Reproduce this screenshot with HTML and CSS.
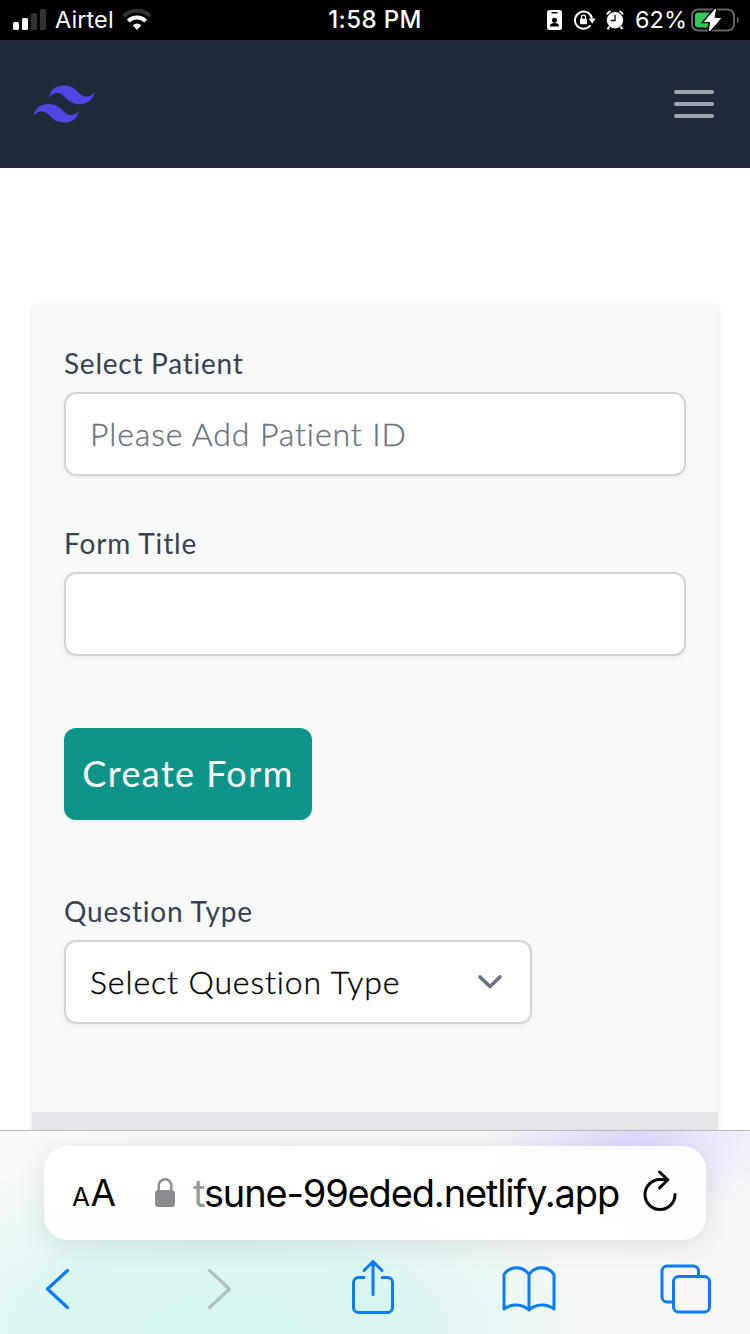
FILE: index.html
```html
<!DOCTYPE html>
<html lang="en">
<head>
<meta charset="utf-8">
<title>Create Form</title>
<link rel="stylesheet" href="styles.css">
</head>
<body>
<div class="screen">
  <header class="status">
    <div class="status-left">
      <svg class="signal" width="34" height="22" viewBox="0 0 34 22"><rect x="0" y="13" width="6" height="8" rx="1.6" fill="#fff"/><rect x="9" y="9" width="6" height="12" rx="1.6" fill="#fff"/><rect x="18" y="4" width="6" height="17" rx="1.6" fill="#333"/><rect x="27" y="0" width="6" height="21" rx="1.6" fill="#333"/></svg>
      <span class="carrier">Airtel</span>
      <svg class="wifi" width="30" height="22" viewBox="0 0 30 22"><g fill="none" stroke-width="4"><path d="M1.7 7.2a18.8 18.8 0 0 1 26.6 0" stroke="#333"/><path d="M6.3 12.2a12.3 12.3 0 0 1 17.4 0" stroke="#fff"/></g><path d="M10.8 16.2a6 6 0 0 1 8.4 0L15 21z" fill="#fff"/></svg>
    </div>
    <span class="time">1:58 PM</span>
    <div class="status-right">
      <svg width="15" height="20" viewBox="0 0 15 20"><rect width="15" height="20" rx="2.5" fill="#fff"/><path d="M4.500 2.800h6" stroke="#000" stroke-width="1.400"/><circle cx="7.500" cy="10.200" r="2.500"/><path d="M3 16.500c0-2.500 1.700-3.600 4.500-3.600s4.500 1.100 4.500 3.600z"/></svg>
      <svg class="rotation" width="22" height="20" viewBox="0 0 22 20"><path d="M16.500 15.200A8.600 8.600 0 1 1 18 8.500" fill="none" stroke="#fff" stroke-width="1.900"/><path d="M14.600 8.600h7l-3.300 4.900z" fill="#fff"/><rect x="6" y="8.700" width="7" height="5.500" rx=".8" fill="#fff"/><path d="M7.500 9V7.200a2 2 0 0 1 4 0V9" fill="none" stroke="#fff" stroke-width="1.300"/></svg>
      <svg class="alarm" width="18" height="20" viewBox="0 0 18 20"><circle cx="9" cy="10.300" r="8.200" fill="#fff"/><path d="M.9 4.600A9 9 0 0 1 4.500 1.200M17.100 4.600a9 9 0 0 0-3.600-3.400M3.500 16.500l-2 2.600M14.500 16.500l2 2.600" stroke="#fff" stroke-width="2" fill="none"/><path d="M9 5v5.500H4.700" fill="none" stroke="#000" stroke-width="1.300"/></svg>
      <span class="percent">62%</span>
      <svg class="battery" width="49" height="24" viewBox="0 0 49 24"><rect x="1" y="1.500" width="42" height="21" rx="6" fill="none" stroke="#666" stroke-width="2"/><path d="M46 8.500c2.300 1.500 2.300 5.500 0 7z" fill="#666"/><path d="M7.500 4.500H21L12 14.500H17.500L16.500 19.500H7.500a3.500 3.500 0 0 1-3.500-3.500V8a3.500 3.500 0 0 1 3.500-3.500z" fill="#34c759"/><path d="M24.500 1L13.500 13.500h6L18.500 23 29.500 10.500h-6.500z" fill="#fff" stroke="#000" stroke-width="3.500" paint-order="stroke"/><path d="M24.500 1L13.500 13.500h6L18.500 23 29.500 10.500h-6.500z" fill="#fff" stroke="#fff" stroke-linejoin="round"/></svg>
    </div>
  </header>
  <nav class="nav">
    <svg width="62" height="38" viewBox="0 4.600 24 14.800"><path fill="#4f46e5" d="M12 4.800c-3.200 0-5.200 1.600-6 4.800 1.200-1.600 2.600-2.200 4.200-1.800.913.228 1.565.89 2.288 1.624C13.666 10.618 15.027 12 18 12c3.200 0 5.200-1.600 6-4.800-1.200 1.600-2.600 2.200-4.200 1.800-.913-.228-1.565-.89-2.288-1.624C16.337 6.182 14.976 4.800 12 4.800zM6 12c-3.200 0-5.200 1.600-6 4.800 1.200-1.600 2.600-2.200 4.200-1.800.913.228 1.565.89 2.288 1.624C7.666 17.818 9.027 19.200 12 19.200c3.200 0 5.200-1.600 6-4.800-1.200 1.600-2.600 2.200-4.200 1.800-.913-.228-1.565-.89-2.288-1.624C10.337 13.382 8.976 12 6 12z"/></svg>
    <svg width="40" height="28" viewBox="0 0 40 28"><path d="M2 2h36M2 14h36M2 26h36" stroke="#9ca3af" stroke-width="4" stroke-linecap="round"/></svg>
  </nav>
  <main class="page">
    <form class="card">
      <div class="fields">
        <label class="label l-patient" for="patient">Select Patient</label>
        <input class="field" id="patient" placeholder="Please Add Patient ID">
        <label class="label l-title" for="title">Form Title</label>
        <input class="field" id="title">
        <button class="create" type="button">Create Form</button>
        <span class="label l-type">Question Type</span>
        <div class="field select"><span>Select Question Type</span>
          <svg width="26" height="16" viewBox="0 0 26 16"><path d="M3 3l10 9.500L23 3" fill="none" stroke="#6b7280" stroke-width="3.700" stroke-linecap="round" stroke-linejoin="round"/></svg>
        </div>
      </div>
      <div class="card-foot"></div>
    </form>
  </main>
  <footer class="browser">
    <div class="address">
      <span class="aa"><span class="small-a">A</span>A</span>
      <svg class="lock" width="20" height="30" viewBox="0 0 20 30"><rect y="12" width="20" height="17" rx="3.500" fill="#8a8a8f"/><path d="M3.700 13V7.500a6.300 6.300 0 0 1 12.600 0V13" fill="none" stroke="#8a8a8f" stroke-width="2.400"/></svg>
      <span class="url"><span class="faded">t</span>sune-99eded.netlify.app</span>
      <svg class="reload" width="36" height="42" viewBox="0 0 36 42"><g fill="none" stroke="#000" stroke-width="3" stroke-linecap="round" stroke-linejoin="round"><path d="M32 24.500A15 15 0 1 1 17 9.500h7"/><path d="M16.500 2l8.300 7.800L16.500 18"/></g></svg>
    </div>
    <div class="tools">
      <svg class="back" width="26" height="42" viewBox="0 0 26 42"><path d="M22.500 2.500L2.500 21l20 18.500" fill="none" stroke="#0a7aff" stroke-width="3.200" stroke-linecap="round" stroke-linejoin="round"/></svg>
      <svg class="forward" width="26" height="42" viewBox="0 0 26 42"><path d="M3.500 2.500l20 18.500-20 18.500" fill="none" stroke="#b1c0be" stroke-width="3.200" stroke-linecap="round" stroke-linejoin="round"/></svg>
      <svg class="share" width="44" height="56" viewBox="0 0 44 56"><g fill="none" stroke="#0a7aff" stroke-width="3" stroke-linecap="round" stroke-linejoin="round"><path d="M14 18.500H7.500a5 5 0 0 0-5 5V48.500a5 5 0 0 0 5 5h29a5 5 0 0 0 5-5V23.500a5 5 0 0 0-5-5H30" stroke-linecap="butt"/><path d="M22 35.500V3M13 11.500L22 2.500l9 9"/></g></svg>
      <svg class="book" width="54" height="46" viewBox="0 0 54 46"><path d="M27 8.500C21-.5 8-.5 2 8.500V43C9 37.500 20 37.500 27 44V8.500C33-.5 46-.5 52 8.500V43C45 37.500 34 37.500 27 44" fill="none" stroke="#0a7aff" stroke-width="3" stroke-linecap="round" stroke-linejoin="round"/></svg>
      <svg class="tabs" width="52" height="50" viewBox="0 0 52 50"><g fill="none" stroke="#0a7aff" stroke-width="3"><rect x="13.500" y="12.500" width="36" height="35.500" rx="5"/><path d="M38.500 12.500V7a5 5 0 0 0-5-5H7a5 5 0 0 0-5 5V33a5 5 0 0 0 5 5H13.500"/></g></svg>
    </div>
  </footer>
</div>
</body>
</html>
```
FILE: styles.css
```css
* { box-sizing: border-box; }
body { margin: 0; background: #fff; }
svg { display: block; flex: none; }
.screen { width: 750px; height: 1334px; display: flex; flex-direction: column; overflow: hidden; }

.status { height: 40px; flex: none; background: #000; color: #fff; display: grid; grid-template-columns: 1fr auto 1fr; align-items: center; font: 400 23.5px/40px Inter, sans-serif; white-space: nowrap; }
.status-left { display: flex; align-items: center; padding-left: 13px; }
.carrier { margin-left: 8px; letter-spacing: .1px; }
.wifi { margin-left: 8px; }
.time { font-weight: 500; font-size: 24px; letter-spacing: .4px; }
.status-right { display: flex; align-items: center; justify-content: flex-end; padding-right: 10px; }
.rotation { margin-left: 12px; }
.alarm { margin-left: 10px; }
.percent { margin-left: 11px; letter-spacing: 0; }
.battery { margin-left: 4px; }

.nav { height: 128px; flex: none; background: #202937; display: flex; align-items: center; justify-content: space-between; padding: 0 36px 0 33px; }

.page { height: 962px; flex: none; padding: 136px 32px 0; overflow: hidden; font-family: Lato, sans-serif; }
.card { width: 686px; background: #f8faf9; box-shadow: 0 2px 6px rgba(0,0,0,.08), 0 2px 4px rgba(0,0,0,.04); }
.fields { height: 808px; padding: 40px 32px 0; display: flex; flex-direction: column; align-items: flex-start; }
.card-foot { height: 60px; background: #e4e5e9; }
.label { font-size: 28px; line-height: 38px; height: 40px; margin-bottom: 8px; color: #374151; white-space: nowrap; }
.field { width: 622px; height: 84px; flex: none; padding: 0 24px 2px; border: 2px solid #d1d5db; border-radius: 12px; background: #fff; box-shadow: 0 2px 4px rgba(0,0,0,.05); font: 300 32px/48px Lato, sans-serif; letter-spacing: .9px; color: #000; margin: 0 0 48px; outline: none; -webkit-text-stroke: .35px; }
.field::placeholder { color: #6b7280; opacity: 1; }
.l-patient { letter-spacing: .75px; }
.l-title { letter-spacing: .85px; }
.l-type { letter-spacing: .8px; }
.create { width: 248px; height: 92px; flex: none; margin: 24px 0 72px; padding: 0 0 3px; border: 0; border-radius: 12px; background: #0d9488; color: #fff; font: 400 36px/56px Lato, sans-serif; letter-spacing: 1.4px; box-shadow: 0 2px 4px rgba(0,0,0,.05); white-space: nowrap; }
.select { width: 468px; display: flex; align-items: center; justify-content: space-between; padding: 0 27px 0 24px; white-space: nowrap; }

.browser { height: 204px; flex: none; border-top: 1px solid #b9babf; padding: 15px 44px 0; background: radial-gradient(ellipse 150px 90px at 635px 0, rgba(218,213,255,.9), rgba(218,213,255,0)), radial-gradient(ellipse 380px 190px at 220px 204px, #d5f6f2 0, #d9f6f2 45%, rgba(217,246,242,0) 100%), linear-gradient(90deg, #f9fafa, #f7f7f8 65%, #f6f6f8); }
.address { height: 94px; display: flex; align-items: center; border-radius: 24px; background: rgba(255,255,255,.9); box-shadow: 0 4px 28px rgba(0,0,0,.1); padding-left: 28px; font-family: Inter, sans-serif; color: #000; white-space: nowrap; }
.aa { font-size: 37px; width: 46px; line-height: 50px; padding-top: 4px; letter-spacing: .5px; }
.small-a { font-size: 26px; }
.lock { margin-left: 37px; }
.url { width: 428px; margin-left: 18px; font-size: 38px; line-height: 50px; letter-spacing: -1.15px; }
.faded { color: #999; }
.reload { margin-left: 22px; margin-bottom: 5px; }
.tools { height: 98px; display: flex; align-items: center; }
.back { margin-left: 1px; }
.forward { margin-left: 135px; }
.share { margin-left: 119px; margin-bottom: 4px; }
.book { margin-left: 107px; }
.tabs { margin-left: 104px; margin-bottom: 1px; }
```
